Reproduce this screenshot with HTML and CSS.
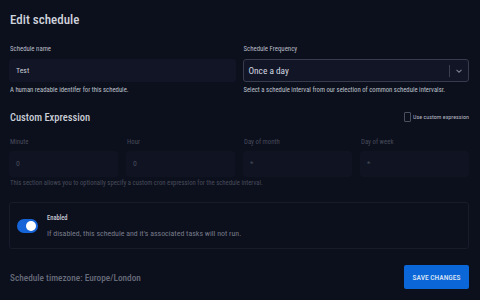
FILE: index.html
```html
<!DOCTYPE html>
<html lang="en">
<head>
    <meta charset="UTF-8" />
    <title>Edit schedule</title>
    <link rel="stylesheet" href="styles.css">
</head>
<body>
<div class="page">
    <h1 class="title">Edit schedule</h1>

    <div class="row two">
        <div class="field">
            <label class="label">Schedule name</label>
            <div class="input">Test</div>
            <div class="help">A human readable identifer for this schedule.</div>
        </div>
        <div class="field">
            <label class="label">Schedule Frequency</label>
            <div class="select">
                <span class="select-value">Once a day</span>
                <span class="select-sep"></span>
                <svg class="chevron" width="8" height="8" viewBox="0 0 8 8"><path d="M1.5 2.8 L4 5.2 L6.5 2.8" fill="none" stroke="#7a7f8e" stroke-width="1.1"/></svg>
            </div>
            <div class="help">Select a schedule interval from our selection of common schedule intervalsr.</div>
        </div>
    </div>

    <div class="section-head">
        <h2 class="subtitle">Custom Expression</h2>
        <label class="check"><span class="box"></span>Use custom expression</label>
    </div>

    <div class="row four">
        <div class="field dim">
            <label class="label">Minute</label>
            <div class="input">0</div>
        </div>
        <div class="field dim">
            <label class="label">Hour</label>
            <div class="input">0</div>
        </div>
        <div class="field dim">
            <label class="label">Day of month</label>
            <div class="input">*</div>
        </div>
        <div class="field dim">
            <label class="label">Day of week</label>
            <div class="input">*</div>
        </div>
    </div>
    <div class="help dim-help">This section allows you to optionally specify a custom cron expression for the schedule interval.</div>

    <div class="toggle-card">
        <span class="switch"><span class="knob"></span></span>
        <div>
            <div class="toggle-title">Enabled</div>
            <div class="toggle-desc">If disabled, this schedule and it's associated tasks will not run.</div>
        </div>
    </div>

    <div class="footer">
        <span class="tz">Schedule timezone: Europe/London</span>
        <button class="save">SAVE CHANGES</button>
    </div>
</div>
</body>
</html>
```

FILE: styles.css
```css
body {
    margin: 0;
    background: #0c0f1c;
    font-family: Roboto, "Liberation Sans", sans-serif;
    font-stretch: 75%;
    color: #c9cdd6;
}

.page {
    padding: 12px 11px 0 9px;
}

.title {
    margin: 0 0 0 1px;
    font-size: 13px;
    font-weight: 500;
    color: #cfd3dc;
    line-height: 16px;
}

.row {
    display: grid;
    gap: 7px;
}

.row.two {
    grid-template-columns: 1fr 1fr;
    margin-top: 16px;
}

.row.four {
    grid-template-columns: repeat(4, 1fr);
    gap: 8px;
    margin-top: 12px;
}

.label {
    display: block;
    font-size: 6.8px;
    color: #b9bdc7;
    margin: 0 0 5px 1px;
    line-height: 10px;
}

.input {
    height: 23px;
    line-height: 23px;
    background: #111526;
    border-radius: 3px;
    padding-left: 7px;
    font-size: 7.8px;
    color: #c7cbd4;
}

.select {
    height: 21px;
    border: 1px solid #363b4d;
    border-radius: 3px;
    background: #111526;
    display: flex;
    align-items: center;
    padding-left: 5px;
}

.select-value {
    flex: 1;
    font-size: 9.3px;
    color: #d4d8e0;
}

.select-sep {
    width: 1px;
    height: 12px;
    background: #3a3f50;
    margin-right: 5px;
}

.chevron {
    margin-right: 5px;
}

.help {
    font-size: 6.7px;
    color: #bfc3cc;
    margin: 4px 0 0 1px;
    line-height: 8px;
}

.section-head {
    display: flex;
    justify-content: space-between;
    align-items: center;
    margin-top: 17px;
}

.subtitle {
    margin: 0 0 0 1px;
    font-size: 10.5px;
    font-weight: 500;
    color: #c9cdd6;
    line-height: 14px;
}

.check {
    display: flex;
    align-items: center;
    font-size: 6.1px;
    color: #b4b8c2;
    margin-bottom: 3px;
}

.box {
    width: 5px;
    height: 8px;
    border: 1px solid #4a4f60;
    border-radius: 1px;
    margin-right: 2px;
}

.field.dim .label {
    color: #474c5b;
    margin-bottom: 4px;
}

.field.dim .input {
    height: 26px;
    line-height: 26px;
    background: #0f1322;
    color: #474c5b;
}

.dim-help {
    color: #474c5b;
    margin-top: 2px;
}

.toggle-card {
    margin-top: 15px;
    border: 1px solid #171b2a;
    border-radius: 3px;
    height: 45px;
    display: flex;
    align-items: center;
    padding-left: 7px;
}

.switch {
    width: 21px;
    height: 14px;
    border-radius: 7px;
    background: #1565d8;
    margin-right: 9px;
    position: relative;
}

.knob {
    position: absolute;
    right: 2px;
    top: 2px;
    width: 10px;
    height: 10px;
    border-radius: 50%;
    background: #ffffff;
}

.toggle-title {
    font-size: 6.5px;
    font-weight: 500;
    color: #c9cdd6;
    margin-bottom: 7px;
}

.toggle-desc {
    font-size: 7.9px;
    color: #767b89;
}

.footer {
    display: flex;
    justify-content: space-between;
    align-items: center;
    margin-top: 16px;
}

.tz {
    margin-left: 1px;
    font-size: 9.3px;
    font-weight: 500;
    color: #666b79;
}

.save {
    border: none;
    background: #0b66d8;
    color: #d9e4f5;
    font-family: inherit;
    font-stretch: 75%;
    font-size: 7.5px;
    font-weight: 500;
    white-space: nowrap;
    width: 65px;
    height: 24px;
    border-radius: 2px;
}
```
